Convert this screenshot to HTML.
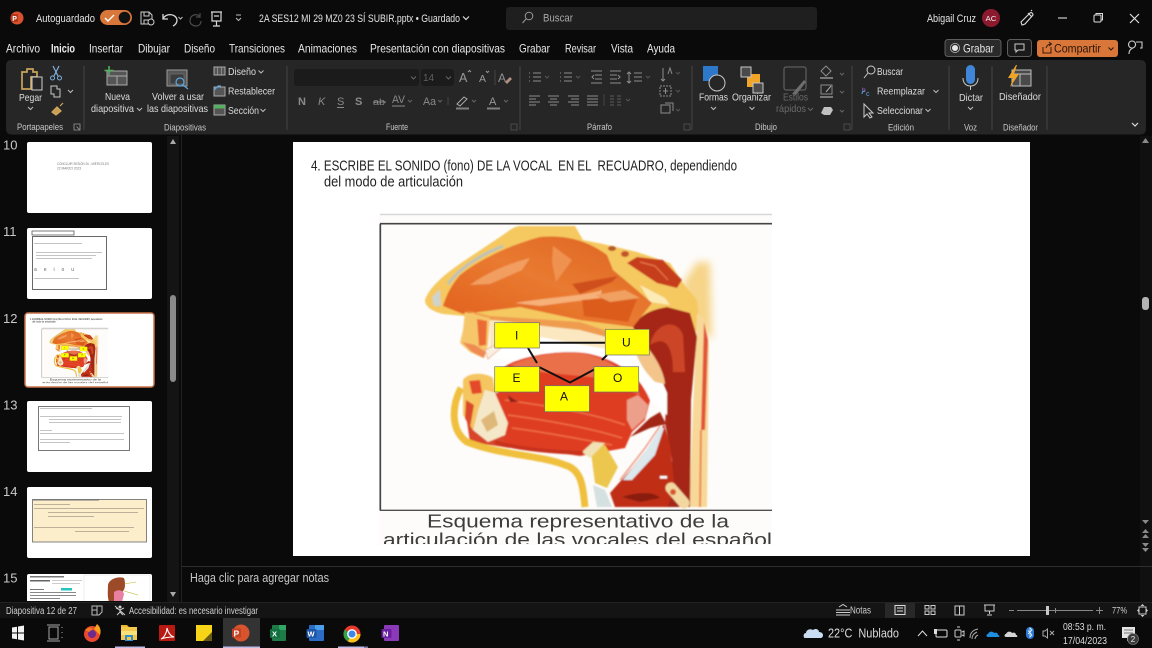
<!DOCTYPE html>
<html lang="es"><head><meta charset="utf-8"><title>PowerPoint</title>
<style>
html,body{margin:0;padding:0;background:#0a0a0a;width:1152px;height:648px;overflow:hidden}
svg{display:block;filter:blur(.35px)}
text{font-family:"Liberation Sans",sans-serif;fill:#e4e4e4;font-size:11px}
.tab{font-size:12px;fill:#e8e8e8}
.rb{font-size:10.5px;fill:#dcdcdc}
.lb{font-size:9.5px;fill:#c8c8c8}
.dim{fill:#6a6a6a}
.ic{fill:none;stroke:#c8c8c8;stroke-width:1}
.ch{fill:none;stroke:#bdbdbd;stroke-width:1}
.chd{fill:none;stroke:#666;stroke-width:1}
.sep{stroke:#444;stroke-width:1}
</style></head><body>
<svg width="1152" height="648" viewBox="0 0 1152 648" xmlns="http://www.w3.org/2000/svg">
<defs>
<filter id="soft" x="-5%" y="-5%" width="110%" height="110%"><feGaussianBlur stdDeviation=".9"/></filter>
<filter id="soft2" x="-30%" y="-30%" width="160%" height="160%"><feGaussianBlur stdDeviation="4"/></filter>
<linearGradient id="nas" x1="0" y1="1" x2="1" y2="0"><stop offset="0" stop-color="#e05e1c"/><stop offset=".5" stop-color="#e97a30"/><stop offset="1" stop-color="#dc6222"/></linearGradient>
<clipPath id="capclip"><rect x="379" y="510" width="393" height="34"/></clipPath>
<clipPath id="t15"><rect x="27" y="574" width="125" height="27"/></clipPath>
<g id="slide">
<rect x="293" y="142" width="737" height="414" fill="#fff"/>
<text x="311" y="170.500" textLength="426" lengthAdjust="spacingAndGlyphs" xml:space="preserve" style="font-size:14.500px;fill:#222">4. ESCRIBE EL SONIDO (fono) DE LA VOCAL  EN EL  RECUADRO, dependiendo</text>
<text x="324" y="186.500" textLength="139" lengthAdjust="spacingAndGlyphs" style="font-size:14.500px;fill:#222">del modo de articulación</text>
<rect x="379" y="213" width="393" height="332" fill="#fdfcfa"/>
<path d="M683,283L697,262L710,262L712,340L690,320Z" fill="#f6d488" filter="url(#soft2)"/>
<g filter="url(#soft)">
<path d="M425,300C430,285 450,270 470,257L500,237C510,230 515,226 520,226L575,226L583,240L603,244L637,252L670,263L683,283L697,300L700,330L640,345L465,316L443,314C435,312 425,308 425,300Z" fill="#f5c860"/>
<path d="M448,284C460,268 480,255 503,246" fill="none" stroke="#bcc2b8" stroke-width="3"/>
<path d="M432,297L440,289L441,306L434,306Z" fill="#cfd3ce"/>
<path d="M627,263L637,257L663,260L682,280L677,288L657,283Z" fill="#c63c1c"/>
<path d="M640,262L655,266L668,280" fill="none" stroke="#e87848" stroke-width="1.200"/>
<ellipse cx="612" cy="248.500" rx="4" ry="2.500" fill="#b85a25"/><ellipse cx="625" cy="254" rx="4" ry="3" fill="#c2552a"/>
<path d="M640,285L665,298L670,305L650,302Z" fill="#fcebb6"/>
<path d="M697,313L705,320L709,345L707,507L689,507Z" fill="#f8d898"/>
<path d="M704,322L708,340L705,430L701,430Z" fill="#e2553a"/>
<path d="M701,430L700,507" stroke="#ea8a50" stroke-width="2"/>
<path d="M633,327C640,315 650,310 667,307L690,313L697,337L691,400L690,507L665,507L672,460L665,423L667,393L662,380L645,350Z" fill="#a52714"/>
<path d="M650,345C655,322 677,318 683,335L685,372L673,372C673,345 665,335 650,345Z" fill="#cc4526"/>
<path d="M443,306C448,290 455,281 460,275C480,259 510,245 540,237C560,235 585,238 607,255L613,270L625,280L652,303L633,327L580,320L520,307L463,314Z" fill="url(#nas)"/>
<path d="M470,285C490,270 515,262 530,258L522,270L490,284Z" fill="#f29e60"/>
<path d="M515,303C550,297 585,296 602,290L600,298L540,306Z" fill="#f6b078"/>
<path d="M553,246L572,260L556,282L552,262Z" fill="#ef9250"/>
<path d="M572,284L618,276L612,282L580,294Z" fill="#cf501a"/>
<path d="M582,300L638,296L628,322L584,316Z" fill="#dc5c1a"/>
<path d="M595,295L625,290L640,298L610,302Z" fill="#f0a060"/>
<path d="M465,310L490,316L580,322L640,342L640,347L580,332L497,320L490,320Z" fill="#ef9c50"/>
<path d="M490,320L580,330L640,346L640,356L540,337L500,340L490,350Z" fill="#fbe8c0"/>
<path d="M540,337L640,355L660,382L667,393L667,415L648,397L640,378L620,365L580,352L520,360L490,358L500,345Z" fill="#fff"/>
<path d="M645,345C655,355 664,372 665,384L655,382C648,375 642,368 637,356Z" fill="#f3c58a"/>
<path d="M463,395L470,442L510,448L512,392Z" fill="#d8452a"/>
<path d="M503,368C520,355 560,350 585,353C615,358 640,375 650,400L645,420L632,432L625,448L580,456L505,445L498,395Z" fill="#df3c22"/>
<path d="M510,365C540,352 575,350 590,355C615,362 630,375 640,395L600,378L540,372Z" fill="#ea6f48"/>
<path d="M505,400C540,405 590,412 625,425M508,415C545,420 590,428 622,438M512,428C545,432 585,440 612,445" fill="none" stroke="#ee6e46" stroke-width="1.500"/>
<path d="M627,400L638,395L648,405L645,418L632,430L627,420Z" fill="#ec9f8a"/>
<path d="M610,493L633,467L657,437L664,424L670,445L675,490L667,507L615,507Z" fill="#c02e18"/>
<path d="M630,437L650,418L660,412L666,424L650,428Z" fill="#a22816"/>
<path d="M623,480L645,452L660,428L664,428L655,455L632,480Z" fill="#dce8ec"/>
<path d="M620,480L645,448L660,426" fill="none" stroke="#ef9a84" stroke-width="1.500"/>
<path d="M590,445L605,445L618,467L607,488L595,483Z" fill="#ecc64e"/>
<path d="M593,485L605,490L612,507L597,507Z" fill="#d5e0e0"/>
<path d="M582,452L593,442L605,443L590,458Z" fill="#f0e2b4"/>
<path d="M671,488L684,503" stroke="#f2d8a0" stroke-width="11" stroke-linecap="round"/>
<circle cx="673" cy="492" r="3" fill="#d8562f"/>
<path d="M622,497C640,491 655,492 660,498L640,502Z" fill="#8a1c10"/>
<rect x="660" y="476" width="7" height="2.500" fill="#fff"/>
<path d="M465,312L490,318L488,345L483,358L470,352L460,343L463,330Z" fill="#f6c76a"/>
<path d="M477,319L487,321L486,345L479,346Z" fill="#ec6a35"/>
<path d="M462,342L472,352L484,358L486,352L475,345Z" fill="#ef8a55"/>
<path d="M485,350L497,344L501,348L488,359Z" fill="#f9f0e2" stroke="#ef9a60" stroke-width=".7"/>
<path d="M461,388C452,405 450,430 467,442C500,455 540,455 565,465C583,470 583,490 585,507" fill="none" stroke="#f0bf3c" stroke-width="7"/>
<path d="M463,380C468,372 485,372 493,378L495,393L485,390L478,410L473,430L463,415L463,400Z" fill="#f5c560"/>
<path d="M469,381L480,380L482,393L472,394Z" fill="#e4492a"/>
<path d="M466,400L474,405L470,428L465,418Z" fill="#dc4a2a"/>
<path d="M495,442C520,450 560,452 583,453" fill="none" stroke="#c8301a" stroke-width="4"/>
<path d="M485,390L495,393L508,423L505,435L488,442L473,430L478,410Z" fill="#f5e8c8"/>
<path d="M481,420L494,411L498,425L487,432Z" fill="#deb878"/>
<path d="M508,395L515,400L519,402L510,402Z" fill="#8e2414"/>
</g>
<path d="M380,214.500H772" stroke="#d8d8d8" stroke-width="1.600"/>
<path d="M380,223.700H772" stroke="#454545" stroke-width="1.700"/>
<path d="M380.300,223.700V510.500" stroke="#454545" stroke-width="1.700"/>
<path d="M380,510.300H772" stroke="#505050" stroke-width="1.300"/>
<path d="M540,342.700H606" stroke="#111" stroke-width="2"/>
<path d="M528,348L537,363M539,367L570,382.500L597,368M602,360L607,355" stroke="#111" stroke-width="2" fill="none"/>
<g fill="#ffff00" stroke="#6f6f6f" stroke-width=".7">
<rect x="494.700" y="322.700" width="44.700" height="25.300"/><rect x="605.300" y="329.300" width="44" height="25.700"/><rect x="494.700" y="366.700" width="44.700" height="25.300"/><rect x="594" y="366.700" width="44.700" height="25.300"/><rect x="544.700" y="385.700" width="44.700" height="26"/>
</g>
<text x="515" y="339.500" style="font-size:12px;fill:#111">I</text>
<text x="622" y="346.500" style="font-size:12px;fill:#111">U</text>
<text x="512.500" y="382" style="font-size:12px;fill:#111">E</text>
<text x="613" y="382" style="font-size:12px;fill:#111">O</text>
<text x="560" y="400.500" style="font-size:12px;fill:#111">A</text>
<text x="427" y="527.500" textLength="302" lengthAdjust="spacingAndGlyphs" style="font-size:18px;fill:#3d3d3d">Esquema representativo de la</text>
<text x="383" y="546" textLength="389" lengthAdjust="spacingAndGlyphs" clip-path="url(#capclip)" style="font-size:18px;fill:#3d3d3d">articulación de las vocales del español</text>
</g>
</defs>

<rect width="1152" height="648" fill="#0a0a0a"/>

<!-- title bar -->
<circle cx="17" cy="18" r="6.500" fill="#d8522e"/><rect x="11" y="14" width="7" height="8" rx="1" fill="#b5361a"/><text x="12.300" y="21" style="font-size:7px;font-weight:bold;fill:#fff">P</text>
<text x="36" y="22" textLength="59" lengthAdjust="spacingAndGlyphs" style="font-size:11px">Autoguardado</text>
<rect x="100" y="10" width="32" height="15" rx="7.500" fill="#d9773a"/><circle cx="124.500" cy="17.500" r="5.800" fill="#111"/><path d="M105,18l3,3l6,-6" fill="none" stroke="#fff" stroke-width="1.400"/>
<path d="M141,12h8l3,3v9h-11zM144,12v4h5v-4M144,24v-4h5v4" fill="none" stroke="#cfcfcf"/><circle cx="151" cy="22" r="3" fill="#0a0a0a" stroke="#cfcfcf"/>
<path d="M163,14v5h5M163,19c2,-6 13,-6 14,1c0,3 -2,5 -4,6" fill="none" stroke="#d8d8d8" stroke-width="1.300"/>
<path d="M178.500,17l2,2l2,-2" class="ch"/>
<path d="M200,13v4h-4M200,17c-2,-4 -10,-3 -10,4c0,3 3,5 6,5c3,0 5,-2 5,-5" fill="none" stroke="#4a4a4a" stroke-width="1.200"/>
<path d="M211,12h11M212,12v9h9v-9M216.500,21v5M213,26h7M214,16h5" fill="none" stroke="#d8d8d8" stroke-width="1.200"/>
<path d="M236,15h5M236,18l2.500,2.500l2.500,-2.500" fill="none" stroke="#bdbdbd"/>
<text x="259" y="22" textLength="201" lengthAdjust="spacingAndGlyphs" style="font-size:11px">2A SES12 MI 29 MZ0 23 SÍ SUBIR.pptx • Guardado</text>
<path d="M463,16.500l3,3l3,-3" fill="none" stroke="#ddd" stroke-width="1.200"/>
<rect x="506" y="7" width="311" height="23" rx="3" fill="#1f1f1f"/>
<circle cx="529" cy="16" r="3.800" fill="none" stroke="#999"/><path d="M526,19l-3.500,4" stroke="#999"/>
<text x="543" y="21.500" textLength="30" lengthAdjust="spacingAndGlyphs" style="font-size:11px;fill:#a8a8a8">Buscar</text>
<text x="927" y="22" textLength="49" lengthAdjust="spacingAndGlyphs" style="font-size:11px">Abigail Cruz</text>
<circle cx="991" cy="18" r="9" fill="#8b1a2f"/><text x="985.500" y="21" textLength="11" lengthAdjust="spacingAndGlyphs" style="font-size:7.500px;fill:#eee">AC</text>
<path d="M1022,25l-1,-3l9,-9c1,-1 3,0 3,2l-8,9zM1028,13l4,4M1031,11l1,-1" fill="none" stroke="#ddd" stroke-width="1.100"/>
<path d="M1058,18h9" stroke="#ddd" stroke-width="1.100"/>
<rect x="1094" y="15" width="7" height="7" rx="1" fill="none" stroke="#ddd"/><path d="M1096,15v-1.500h6.500v6.500h-1.500" fill="none" stroke="#ddd"/>
<path d="M1130,14l9,9M1139,14l-9,9" stroke="#e6e6e6" stroke-width="1.100"/>

<!-- tabs -->
<text class="tab" x="6" y="52.500" textLength="34" lengthAdjust="spacingAndGlyphs">Archivo</text>
<text class="tab" x="51" y="52.500" textLength="24" lengthAdjust="spacingAndGlyphs" style="font-weight:bold;fill:#f0f0f0">Inicio</text>
<rect x="51" y="62" width="24" height="2" rx="1" fill="#e08050"/>
<text class="tab" x="89" y="52.500" textLength="34" lengthAdjust="spacingAndGlyphs">Insertar</text>
<text class="tab" x="138" y="52.500" textLength="32" lengthAdjust="spacingAndGlyphs">Dibujar</text>
<text class="tab" x="184" y="52.500" textLength="31" lengthAdjust="spacingAndGlyphs">Diseño</text>
<text class="tab" x="229" y="52.500" textLength="56" lengthAdjust="spacingAndGlyphs">Transiciones</text>
<text class="tab" x="298" y="52.500" textLength="59" lengthAdjust="spacingAndGlyphs">Animaciones</text>
<text class="tab" x="370" y="52.500" textLength="135" lengthAdjust="spacingAndGlyphs">Presentación con diapositivas</text>
<text class="tab" x="519" y="52.500" textLength="31" lengthAdjust="spacingAndGlyphs">Grabar</text>
<text class="tab" x="565" y="52.500" textLength="31" lengthAdjust="spacingAndGlyphs">Revisar</text>
<text class="tab" x="611" y="52.500" textLength="22" lengthAdjust="spacingAndGlyphs">Vista</text>
<text class="tab" x="647" y="52.500" textLength="28" lengthAdjust="spacingAndGlyphs">Ayuda</text>

<rect x="945" y="39.500" width="56" height="17" rx="3" fill="#2a2a2a" stroke="#5e5e5e"/>
<circle cx="955" cy="48" r="3" fill="#e8e8e8"/><circle cx="955" cy="48" r="4.600" fill="none" stroke="#bbb" stroke-width=".8"/>
<text x="963" y="52.500" textLength="31" lengthAdjust="spacingAndGlyphs" style="font-size:12px">Grabar</text>
<rect x="1007.500" y="39.500" width="24" height="17" rx="3" fill="#1a1a1a" stroke="#5e5e5e"/>
<path d="M1015,44h9v6h-6l-2,2v-2h-1z" fill="none" stroke="#ccc"/>
<rect x="1037" y="40" width="81" height="17" rx="3" fill="#d9773a"/>
<path d="M1043,47v6h8v-6M1046,48c1,-3 3,-4 5,-4M1049,42l2.500,2l-2.500,2" fill="none" stroke="#3a1a08"/>
<text x="1054" y="52.500" textLength="47" lengthAdjust="spacingAndGlyphs" style="font-size:12px;fill:#2a1408">Compartir</text>
<path d="M1108.500,47.500l2.500,2.500l2.500,-2.500" fill="none" stroke="#2a1408"/>
<path d="M1129,54c0,-4 2,-5 4,-6M1132,48a3.500,3.500 0 1 1 .1,0M1136,42h6v6h-2" fill="none" stroke="#ccc" stroke-width="1.100"/>

<!-- ribbon -->
<rect x="6" y="60" width="1140" height="74.500" rx="5" fill="#262626"/>
<path class="sep" d="M84,66V130M287,66V130M520,66V130M692,66V130M852,66V130M949,66V130M992,66V130M1047,66V130M495,70V85M448,97V105M604,94V106"/>

<!-- portapapeles -->
<path d="M22,72h5v-3h6v3h4v5h-6v12h-9z" fill="none" stroke="#c9a45c" stroke-width="1.700"/><rect x="32" y="77" width="10" height="13" fill="#262626" stroke="#d0d0d0"/>
<text class="rb" x="19" y="101" textLength="23" lengthAdjust="spacingAndGlyphs">Pegar</text><path d="M28,107l2.500,2.500l2.500,-2.500" class="ch"/>
<path d="M53,66l5,10M59,66l-5,10" stroke="#7fb0de" fill="none" stroke-width="1.200"/><circle cx="52.500" cy="78" r="2" fill="none" stroke="#7fb0de"/><circle cx="59.500" cy="78" r="2" fill="none" stroke="#7fb0de"/>
<path d="M51,86h6v3h3v8h-6v-3h-3z" fill="none" stroke="#c8c8c8"/><path d="M68,90l2.500,2.500l2.500,-2.500" class="ch"/>
<path d="M52,112l5,-5l4,4l-5,4zM60,106l3,-3" fill="#c8a050" stroke="#d0a860" stroke-width="1.200"/>
<text class="lb" x="17" y="130" textLength="46" lengthAdjust="spacingAndGlyphs">Portapapeles</text>
<path d="M74,124h6v6h-6zM76.500,126.500l3,3" fill="none" stroke="#999" stroke-width=".8"/>

<!-- diapositivas -->
<rect x="107" y="71" width="20" height="14" fill="#555" stroke="#aaa"/><path d="M107,76h20M117,76v9" stroke="#aaa" fill="none"/><path d="M109,66v9M104.500,70.500h9" stroke="#55b060" stroke-width="1.500"/>
<text class="rb" x="105" y="100" textLength="25" lengthAdjust="spacingAndGlyphs">Nueva</text>
<text class="rb" x="91" y="112" textLength="43" lengthAdjust="spacingAndGlyphs">diapositiva</text><path d="M137,108l2.500,2.500l2.500,-2.500" class="ch"/>
<rect x="167" y="70" width="20" height="16" fill="#555" stroke="#9a9a9a"/><rect x="170" y="74" width="14" height="10" fill="#3d3d3d" stroke="#777" stroke-width=".6"/><circle cx="180" cy="82" r="4" fill="none" stroke="#5ba8e0" stroke-width="1.200"/><path d="M183,85l5,4" stroke="#5ba8e0" stroke-width="1.200"/>
<text class="rb" x="152" y="100" textLength="52" lengthAdjust="spacingAndGlyphs">Volver a usar</text>
<text class="rb" x="147" y="112" textLength="61" lengthAdjust="spacingAndGlyphs">las diapositivas</text>
<rect x="214" y="67" width="11" height="8" fill="#555" stroke="#aaa"/><path d="M217.500,67v8M221.500,67v8" stroke="#aaa" stroke-width=".6"/>
<text class="rb" x="228" y="75" textLength="28" lengthAdjust="spacingAndGlyphs">Diseño</text><path d="M258.500,70.500l2.500,2.500l2.500,-2.500" class="ch"/>
<rect x="214" y="87" width="11" height="9" fill="#555" stroke="#aaa"/><path d="M214,90l4,-4h3" fill="none" stroke="#5ba8e0" stroke-width="1.300"/>
<text class="rb" x="228" y="94.500" textLength="47" lengthAdjust="spacingAndGlyphs">Restablecer</text>
<rect x="214" y="105" width="11" height="10" fill="#555" stroke="#aaa"/><rect x="214" y="105" width="11" height="3.500" fill="#55b060"/>
<text class="rb" x="228" y="114" textLength="31" lengthAdjust="spacingAndGlyphs">Sección</text><path d="M260.500,109l2.500,2.500l2.500,-2.500" class="ch"/>
<text class="lb" x="164" y="130.500" textLength="42" lengthAdjust="spacingAndGlyphs">Diapositivas</text>

<!-- fuente -->
<rect x="294" y="69" width="125" height="17" rx="3" fill="#1b1b1b"/><path d="M411,76.500l2.500,2.500l2.500,-2.500" class="chd"/>
<rect x="421" y="69" width="33" height="17" rx="3" fill="#1b1b1b"/><text x="423" y="81" style="font-size:10px;fill:#5f5f5f">14</text><path d="M446,76.500l2.500,2.500l2.500,-2.500" class="chd"/>
<text x="459" y="82" style="font-size:12.500px;fill:#9a9a9a">A</text><path d="M468,72l1.500,-1.500l1.500,1.500" fill="none" stroke="#999"/>
<text x="479" y="82" style="font-size:10.500px;fill:#9a9a9a">A</text><path d="M486,71l1.500,1.500l1.500,-1.500" fill="none" stroke="#999"/>
<text x="498" y="82" style="font-size:12px;fill:#909090">A</text><path d="M505,82l5,-5l2,2l-5,5z" fill="#b09080"/>
<text x="298" y="105" style="font-size:11px;font-weight:bold;fill:#8a8a8a">N</text>
<text x="318" y="105" style="font-size:11px;font-style:italic;fill:#8a8a8a">K</text>
<text x="337" y="105" style="font-size:11px;fill:#8a8a8a">S</text><path d="M337,107.500h7" stroke="#8a8a8a"/>
<text x="355" y="105" style="font-size:11px;font-weight:bold;fill:#8a8a8a">S</text>
<text x="373" y="105" textLength="12" lengthAdjust="spacingAndGlyphs" style="font-size:9px;fill:#8a8a8a">ab</text><path d="M373,102h13" stroke="#8a8a8a"/>
<text x="392" y="103" textLength="13" lengthAdjust="spacingAndGlyphs" style="font-size:11px;fill:#8a8a8a">AV</text><path d="M392,106h13" stroke="#8a8a8a"/><path d="M408,100l2,2l2,-2" class="chd"/>
<text x="423" y="105" textLength="13" lengthAdjust="spacingAndGlyphs" style="font-size:11px;fill:#8a8a8a">Aa</text><path d="M438,100l2,2l2,-2" class="chd"/>
<path d="M457,104l7,-7l3,2l-7,7z" fill="none" stroke="#aaa"/><path d="M456,108.500h13" stroke="#808080" stroke-width="2"/><path d="M472,100l2,2l2,-2" class="chd"/>
<text x="489" y="105" style="font-size:11px;fill:#9a9a9a">A</text><path d="M487,108.500h13" stroke="#808080" stroke-width="2"/><path d="M504,100l2,2l2,-2" class="chd"/>
<text class="lb" x="386" y="130" textLength="22" lengthAdjust="spacingAndGlyphs">Fuente</text>
<path d="M511,124h6v6h-6z" fill="none" stroke="#555" stroke-width=".8"/>

<!-- parrafo -->
<g stroke="#8c8c8c" fill="none">
<path d="M529,73h1M533,73h8M529,77h1M533,77h8M529,81h1M533,81h8"/><path d="M545,76l2,2l2,-2" stroke="#555"/>
<path d="M560,73h1M564,73h8M560,77h1M564,77h8M560,81h1M564,81h8"/><path d="M576,76l2,2l2,-2" stroke="#555"/>
<path d="M591,71h11M595,75h7M595,79h7M591,83h11M594,75l-2,2l2,2"/>
<path d="M610,71h11M610,75h7M610,79h7M610,83h11M618,75l2,2l-2,2"/>
<path d="M629,72v11M627,74l2,-2l2,2M627,81l2,2l2,-2M634,73h8M634,77h8M634,81h8"/><path d="M646,76l2,2l2,-2" stroke="#555"/>
<path d="M529,96h11M529,99h7M529,102h11M529,105h7"/>
<path d="M548,96h11M550,99h7M548,102h11M550,105h7"/>
<path d="M568,96h11M571,99h8M568,102h11M571,105h8"/>
<path d="M587,96h11M587,99h11M587,102h11M587,105h11"/>
<path d="M610,96h4M610,99h4M610,102h4M610,105h4M617,96h4M617,99h4M617,102h4M617,105h4" stroke="#5c5c5c"/><path d="M626,99l2,2l2,-2" stroke="#555"/>
<path d="M663,68v13M661,79l2,2l2,-2M668,74l2,-6l2,6"/><path d="M676,72l2,2l2,-2" stroke="#555"/>
<rect x="660" y="86" width="11" height="10" stroke-dasharray="2 1"/><path d="M665.500,88v6M663,91h5"/><path d="M676,90l2,2l2,-2" stroke="#555"/>
<rect x="661" y="105" width="9" height="8"/><path d="M665,103h8v8"/><path d="M676,109l2,2l2,-2" stroke="#555"/>
</g>
<text class="lb" x="587" y="130" textLength="25" lengthAdjust="spacingAndGlyphs">Párrafo</text>
<path d="M684,124h6v6h-6z" fill="none" stroke="#555" stroke-width=".8"/>

<!-- dibujo -->
<rect x="703" y="66" width="15" height="15" fill="#2d78c8"/><circle cx="717" cy="83" r="8" fill="#262626" stroke="#c8c8c8"/>
<text class="rb" x="699" y="100.500" textLength="29" lengthAdjust="spacingAndGlyphs">Formas</text><path d="M711,107l2.500,2.500l2.500,-2.500" class="ch"/>
<rect x="747" y="74" width="13" height="13" fill="#f0a528"/><rect x="741" y="67" width="10" height="10" fill="#4a4a4a" stroke="#c8c8c8"/><rect x="753" y="83" width="10" height="10" fill="#4a4a4a" stroke="#c8c8c8"/>
<text class="rb" x="732" y="100.500" textLength="39" lengthAdjust="spacingAndGlyphs">Organizar</text><path d="M749.500,107l2.500,2.500l2.500,-2.500" class="ch"/>
<rect x="784" y="67" width="22" height="23" rx="2" fill="none" stroke="#6a6a6a"/><path d="M792,94l12,-14l2,2l-10,13z" fill="#6e6e6e"/>
<text class="rb dim" x="783" y="100.500" textLength="25" lengthAdjust="spacingAndGlyphs">Estilos</text>
<text class="rb dim" x="776" y="112" textLength="30" lengthAdjust="spacingAndGlyphs">rápidos</text><path d="M808,108l2.500,2.500l2.500,-2.500" class="chd"/>
<path d="M826,66l5,5l-5,5l-5,-5z" fill="none" stroke="#8c8c8c"/><rect x="820" y="77" width="13" height="2" fill="#777"/>
<rect x="821" y="85" width="11" height="9" fill="none" stroke="#8c8c8c"/><path d="M826,92l5,-6" stroke="#aaa"/><rect x="820" y="96" width="13" height="2" fill="#777"/>
<path d="M821,113l3,-6l7,0l2,3l-3,5h-6z" fill="#c0c0c0"/>
<path d="M840,73l2,2l2,-2M840,91l2,2l2,-2M840,110l2,2l2,-2" class="chd"/>
<text class="lb" x="755" y="130" textLength="22" lengthAdjust="spacingAndGlyphs">Dibujo</text>
<path d="M844,124h6v6h-6z" fill="none" stroke="#555" stroke-width=".8"/>

<!-- edicion -->
<circle cx="871" cy="70" r="4" fill="none" stroke="#ccc"/><path d="M868,73l-4,5" stroke="#ccc"/>
<text class="rb" x="877" y="75" textLength="26" lengthAdjust="spacingAndGlyphs">Buscar</text>
<text x="862" y="92" style="font-size:6.500px;fill:#a06cd0">b</text><text x="866" y="96" style="font-size:7px;fill:#5ba8e0">c</text><path d="M862,94c0,-2 1,-3 3,-3" stroke="#5ba8e0" fill="none"/>
<text class="rb" x="877" y="94.500" textLength="48" lengthAdjust="spacingAndGlyphs">Reemplazar</text><path d="M933.500,90l2.500,2.500l2.500,-2.500" class="ch"/>
<path d="M864,104v13l3,-3l3,4l2,-1l-3,-4h4z" fill="none" stroke="#ccc"/>
<text class="rb" x="877" y="114" textLength="46" lengthAdjust="spacingAndGlyphs">Seleccionar</text><path d="M925.500,109l2.500,2.500l2.500,-2.500" class="ch"/>
<text class="lb" x="888" y="130.500" textLength="26" lengthAdjust="spacingAndGlyphs">Edición</text>

<!-- voz -->
<rect x="966" y="65" width="9" height="19" rx="4.500" fill="#3f86d8"/><path d="M963,78c0,5 3,8 7.500,8s7.500,-3 7.500,-8M970.500,86v4" fill="none" stroke="#c8c8c8"/>
<text class="rb" x="959" y="101" textLength="24" lengthAdjust="spacingAndGlyphs">Dictar</text><path d="M968,107l2.500,2.500l2.500,-2.500" class="ch"/>
<text class="lb" x="964" y="130.500" textLength="13" lengthAdjust="spacingAndGlyphs">Voz</text>

<!-- disenador -->
<rect x="1012" y="70" width="19" height="16" fill="#4a4a4a" stroke="#c0c0c0"/><path d="M1012,74h19M1020,74v12" stroke="#c0c0c0"/><path d="M1016,65l-8,13h5l-3,9l9,-13h-5l3,-9z" fill="#f0a528"/>
<text class="rb" x="999" y="100" textLength="42" lengthAdjust="spacingAndGlyphs">Diseñador</text>
<text class="lb" x="1003" y="130.500" textLength="35" lengthAdjust="spacingAndGlyphs">Diseñador</text>
<path d="M1132,123l3,3l3,-3" fill="none" stroke="#ddd" stroke-width="1.200"/>

<!-- left panel -->
<rect x="181" y="135" width="1" height="467" fill="#222"/>
<text x="3" y="149.500" style="font-size:13px;fill:#c8c8c8">10</text>
<text x="3" y="236" style="font-size:13px;fill:#c8c8c8">11</text>
<text x="3" y="323" style="font-size:13px;fill:#c8c8c8">12</text>
<text x="3" y="409.500" style="font-size:13px;fill:#c8c8c8">13</text>
<text x="3" y="496" style="font-size:13px;fill:#c8c8c8">14</text>
<text x="3" y="582.500" style="font-size:13px;fill:#c8c8c8">15</text>
<rect x="167" y="136" width="12" height="466" fill="#141414"/>
<path d="M170,144l3,-5l3,5z" fill="#aaa"/><path d="M170,592l3,5l3,-5z" fill="#aaa"/>
<rect x="170" y="295" width="6" height="87" rx="3" fill="#8a8a8a"/>

<!-- thumb 10 -->
<rect x="27" y="142" width="125" height="71" rx="2" fill="#fff"/>
<text x="57" y="165" textLength="52" lengthAdjust="spacingAndGlyphs" style="font-size:3.500px;fill:#777">CONCLUIR SESIÓN 26 - MIÉRCOLES</text>
<text x="57" y="169.500" textLength="24" lengthAdjust="spacingAndGlyphs" style="font-size:3.500px;fill:#777">22 MARZO 2023</text>
<!-- thumb 11 -->
<rect x="27" y="228" width="125" height="71" rx="2" fill="#fff"/>
<rect x="32" y="231" width="42" height="4" fill="none" stroke="#444" stroke-width=".7"/>
<rect x="32.500" y="236.500" width="74" height="53" fill="none" stroke="#444" stroke-width=".8"/>
<g fill="#c4c4c4"><rect x="34" y="243" width="48" height="1"/><rect x="36" y="252" width="66" height="1"/><rect x="36" y="255" width="60" height="1"/><rect x="36" y="258" width="56" height="1"/><rect x="34" y="278" width="45" height="1"/></g>
<text x="34" y="271" textLength="40" xml:space="preserve" style="font-size:5px;fill:#666">a   e   i   o   u</text>
<!-- thumb 12 -->
<rect x="25" y="313" width="129" height="74" rx="3" fill="#fff" stroke="#c9744a" stroke-width="1.500"/>
<g transform="translate(27,315) scale(.1696) translate(-293,-142)"><use href="#slide"/></g>
<!-- thumb 13 -->
<rect x="27" y="401" width="125" height="71" rx="2" fill="#fff"/>
<rect x="38.500" y="406.500" width="91" height="44" fill="none" stroke="#555" stroke-width=".8"/>
<g fill="#c4c4c4"><rect x="40" y="408" width="52" height="1"/><rect x="40" y="416" width="82" height="1"/><rect x="49" y="419" width="72" height="1"/><rect x="49" y="422" width="72" height="1"/><rect x="40" y="430" width="12" height="1"/><rect x="40" y="433" width="84" height="1"/><rect x="40" y="439" width="84" height="1"/><rect x="40" y="442" width="30" height="1"/></g>
<!-- thumb 14 -->
<rect x="27" y="487" width="125" height="71" rx="2" fill="#fff"/>
<rect x="32.500" y="499.500" width="114" height="42.500" fill="#fdeecb" stroke="#666" stroke-width=".8"/>
<g fill="#bcb09a"><rect x="33" y="499" width="66" height="1.500" fill="#777"/><rect x="34" y="504" width="36" height="1"/><rect x="34" y="508" width="110" height="1"/><rect x="48" y="512" width="90" height="1"/><rect x="48" y="516" width="46" height="1"/><rect x="34" y="527" width="100" height="1"/><rect x="75" y="531" width="54" height="1"/></g>
<!-- thumb 15 -->
<g clip-path="url(#t15)">
<rect x="27" y="574" width="125" height="71" rx="2" fill="#fff"/>
<rect x="30" y="576" width="34" height="1.500" fill="#777"/><rect x="30" y="580" width="20" height="1.500" fill="#666"/><rect x="52" y="580" width="30" height="1" fill="#ccc"/><rect x="52" y="583" width="28" height="1" fill="#ccc"/><rect x="30" y="589" width="14" height="1" fill="#777"/><rect x="61" y="588" width="11" height="2.500" fill="#25c4c0"/><rect x="30" y="592" width="46" height="1" fill="#888"/><rect x="30" y="595" width="46" height="1" fill="#888"/><rect x="30" y="598" width="30" height="1" fill="#888"/>
<rect x="84" y="575" width="66" height="27" fill="none" stroke="#ddd" stroke-width=".5"/>
<path d="M108,585c1,-6 10,-9 16,-7c2,6 1,12 -2,14l-1,10h-12c-2,-6 -1,-12 -1,-17z" fill="#9c4a28"/><path d="M114,592c4,-3 9,-2 10,2l-2,8h-8z" fill="#e880a0"/>
<path d="M124,584l12,-2M124,591l14,4" stroke="#b8b830" stroke-width=".6"/>
</g>

<!-- main slide -->
<use href="#slide"/>

<!-- right scrollbar -->
<rect x="1140" y="136" width="12" height="466" fill="#101010"/>
<path d="M1142,143l3.500,-5l3.500,5z" fill="#8a8a8a"/>
<rect x="1142" y="297" width="7" height="13" rx="3" fill="#b5b5b5"/>
<path d="M1142,520l3.500,4l3.500,-4z" fill="#8a8a8a"/>
<path d="M1142,533l3.500,-4l3.500,4zM1142,538l3.500,-4l3.500,4z" fill="#8a8a8a"/>
<path d="M1142,543l3.500,4l3.500,-4zM1142,548l3.500,4l3.500,-4z" fill="#8a8a8a"/>

<!-- notes -->
<rect x="182" y="566" width="970" height="1" fill="#2e2e2e"/>
<text x="190" y="582" textLength="139" lengthAdjust="spacingAndGlyphs" style="font-size:12.500px;fill:#c8c8c8">Haga clic para agregar notas</text>

<!-- status bar -->
<rect x="0" y="602" width="1152" height="16" fill="#141414"/>
<rect x="0" y="602" width="1152" height="1" fill="#222"/>
<text x="6" y="614" textLength="71" lengthAdjust="spacingAndGlyphs" style="font-size:10px;fill:#cfcfcf">Diapositiva 12 de 27</text>
<path d="M92,606h10v6l-3,3h-7zM97,606v9M92,610h5" fill="none" stroke="#bbb"/>
<circle cx="120" cy="607" r="1.500" fill="#ccc"/><path d="M116,608l4,2l4,-2M120,610v2l-3,3M120,612l3,3M115,606l10,9" fill="none" stroke="#ccc"/>
<text x="129" y="614" textLength="129" lengthAdjust="spacingAndGlyphs" style="font-size:10px;fill:#cfcfcf">Accesibilidad: es necesario investigar</text>
<path d="M836,610h14M836,612.500h14M836,615h14M839,607l4,-2.500l4,2.500" fill="none" stroke="#ccc"/>
<text x="850" y="613.500" textLength="21" lengthAdjust="spacingAndGlyphs" style="font-size:10px;fill:#cfcfcf">Notas</text>
<rect x="885" y="603" width="30" height="15" fill="#282828"/>
<rect x="895" y="605.500" width="10" height="9" fill="none" stroke="#ddd"/><path d="M897,608h6M897,611h6" stroke="#ddd"/>
<g fill="none" stroke="#ccc"><rect x="925" y="605.500" width="4" height="3.500"/><rect x="931" y="605.500" width="4" height="3.500"/><rect x="925" y="611" width="4" height="3.500"/><rect x="931" y="611" width="4" height="3.500"/>
<path d="M955,606h4.500v9h-4.500zM959.500,606h4.500v9h-4.500z"/>
<rect x="985" y="605" width="9" height="6"/><path d="M984,605h11M989.500,611v3M987,615h5"/></g>
<path d="M1009,610.500h5M1017,610.500h76M1096,610.500h7M1099.500,607v7" stroke="#888"/>
<rect x="1046" y="606" width="3" height="9" fill="#c8c8c8"/><rect x="1055" y="608" width="1" height="5" fill="#888"/>
<text x="1112" y="613.500" textLength="15" lengthAdjust="spacingAndGlyphs" style="font-size:9.500px;fill:#cfcfcf">77%</text>
<rect x="1139" y="607" width="7" height="7" fill="none" stroke="#ccc"/><path d="M1142.500,604l-2,2h4zM1142.500,617l-2,-2h4zM1137,610.500l2,-2v4zM1148,610.500l-2,-2v4z" fill="#ccc"/>

<!-- taskbar -->
<rect x="0" y="618" width="1152" height="30" fill="#0a0a0a"/>
<path d="M12,627.500l5,-.8v5.800h-5zM18,626.500l6,-1v7h-6zM12,633.500h5v5.800l-5,-.8zM18,633.500h6v7l-6,-1z" fill="#f2f2f2"/>
<path d="M49,627h9v12h-9zM47,625h13M47,641h13M62,627v1M62,632v1M62,637v1" fill="none" stroke="#a8a8a8"/>
<circle cx="92" cy="634" r="8" fill="#e8482e"/><path d="M97,624c4,3 4,8 3,11l-6,-6z" fill="#f8a020"/><circle cx="92" cy="634" r="4" fill="#6a2a90"/><path d="M85,630c3,-3 6,-3 8,-1l-4,3z" fill="#f07820"/>
<rect x="121" y="627" width="16" height="13" fill="#f4c84a"/><path d="M121,627v-2h6l2,2z" fill="#e8b830"/><rect x="121" y="631" width="16" height="4" fill="#fce27a"/><rect x="125" y="635" width="8" height="6" fill="#2f8ed0"/><rect x="127" y="637" width="4" height="3" fill="#f4c84a"/>
<rect x="115" y="646.500" width="30" height="1.500" fill="#c0bce8"/>
<rect x="159" y="625" width="16" height="16" rx="1" fill="#b81a12"/><path d="M161,639c3,-1 6,-7 6,-11c1,4 3,8 7,9c-4,0 -8,0 -13,2z" fill="none" stroke="#fff" stroke-width="1.100"/>
<rect x="196" y="625" width="16" height="16" fill="#f6d418"/><path d="M212,632v9h-9z" fill="#6a5a14"/>
<rect x="223" y="618" width="37" height="30" fill="#333"/>
<rect x="223" y="646.500" width="37" height="1.500" fill="#c0bce8"/>
<circle cx="241" cy="633" r="8.500" fill="#d8532e"/><rect x="232" y="628.500" width="9" height="9" rx="1" fill="#c24222"/><text x="233.500" y="636.500" style="font-size:8.500px;font-weight:bold;fill:#fff">P</text>
<rect x="272" y="625" width="14" height="16" rx="1" fill="#1e7a46"/><rect x="279" y="625" width="7" height="5" fill="#33a666"/><rect x="270" y="629" width="10" height="9" rx="1" fill="#107040"/><text x="272" y="636.500" style="font-size:7.500px;font-weight:bold;fill:#fff">X</text>
<rect x="309" y="625" width="15" height="16" rx="1" fill="#2b6cc4"/><rect x="315" y="625" width="9" height="5" fill="#4aa0e8"/><rect x="306.500" y="629" width="10" height="9" rx="1" fill="#1c55a8"/><text x="307.500" y="636.500" style="font-size:7.500px;font-weight:bold;fill:#fff">W</text>
<circle cx="352" cy="634" r="8.500" fill="#e53a2c"/><path d="M352,634L360.500,634A8.500,8.500 0 0 1 347.750,641.360Z" fill="#fbc118"/><path d="M352,634L347.750,641.360A8.500,8.500 0 0 1 344.640,629.750Z" fill="#2fa44a"/><circle cx="352" cy="634" r="4.200" fill="#3f86e8" stroke="#fff" stroke-width="1.400"/>
<rect x="338" y="646.500" width="26" height="1.500" fill="#c0bce8"/><rect x="364" y="646.500" width="4" height="1.500" fill="#807ca8"/>
<rect x="384" y="625" width="15" height="16" rx="1" fill="#8a3ab8"/><rect x="381.500" y="629" width="10" height="9" rx="1" fill="#6a1fa0"/><text x="383" y="636.500" style="font-size:7.500px;font-weight:bold;fill:#fff">N</text>

<!-- tray -->
<path d="M805,638c-2,0 -2,-5 1,-5c0,-3 4,-5 7,-3c2,-2 6,-1 6,2c3,0 4,2 4,3c0,2 -1,3 -3,3z" fill="#c8ddf2"/>
<text x="828" y="637.500" textLength="71" lengthAdjust="spacingAndGlyphs" xml:space="preserve" style="font-size:13px;fill:#dcdcdc">22°C  Nublado</text>
<path d="M918,636l4.500,-5l4.500,5" fill="none" stroke="#ddd"/>
<rect x="936" y="630" width="11" height="7" rx="1" fill="none" stroke="#ddd"/><rect x="934" y="629" width="3" height="5" fill="#ddd"/>
<rect x="955" y="630" width="6" height="7" rx="1" fill="none" stroke="#ccc"/><path d="M962,632l2,-1v5l-2,-1M957,627h3M957,640h3" fill="none" stroke="#ccc"/>
<path d="M972,639c0,-3 1,-5 5,-7M975,639c0,-2 1,-3 3,-4M970,638c0,-5 3,-8 8,-9" fill="none" stroke="#aaa"/>
<path d="M988,637c-2,0 -2,-3 0,-3c1,-3 5,-3 6,-1c2,-1 4,0 4,2c1,0 2,1 1,2z" fill="#1e8fe0"/>
<path d="M1006,637c-2,0 -2,-3 0,-3c1,-3 5,-3 6,-1c2,-1 4,0 4,2c1,0 2,1 1,2z" fill="#d4d4d4"/>
<rect x="1026" y="627" width="8" height="12" rx="4" fill="#2a7ad8"/><path d="M1028,630.500l4,4.500l-2,2v-9l2,2l-4,4" fill="none" stroke="#fff" stroke-width=".7"/>
<path d="M1043,631h2l2.500,-2v9l-2.500,-2h-2zM1050,631l4,4M1054,631l-4,4" fill="none" stroke="#aaa"/>
<text x="1063" y="630" textLength="43" lengthAdjust="spacingAndGlyphs" style="font-size:10.500px;fill:#dcdcdc">08:53 p. m.</text>
<text x="1063" y="644" textLength="44" lengthAdjust="spacingAndGlyphs" style="font-size:10.500px;fill:#dcdcdc">17/04/2023</text>
<path d="M1122,627h13v11h-5l-3,3v-3h-5z" fill="#e4e4e4"/><path d="M1124,630h9M1124,633h9" stroke="#777"/>
<circle cx="1133" cy="639" r="5.500" fill="#3a3a3a" stroke="#888" stroke-width=".6"/><text x="1130.800" y="642" style="font-size:8px;fill:#eee">2</text>
</svg>
</body></html>
